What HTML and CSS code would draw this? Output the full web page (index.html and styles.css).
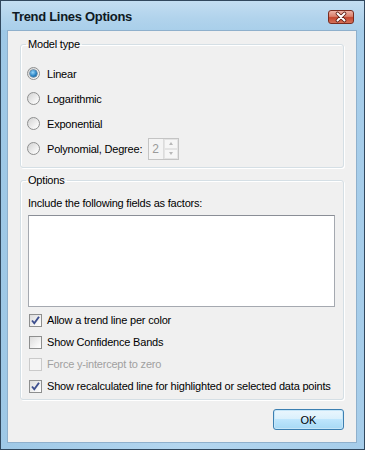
FILE: index.html
```html
<!DOCTYPE html>
<html lang="en">
<head>
  <meta charset="UTF-8" />
  <title>Trend Lines Options</title>
  <link rel="stylesheet" href="styles.css">
</head>
<body>
  <div class="window">
    <div class="titlebar">
      <span class="title">Trend Lines Options</span>
      <span class="close">
        <svg width="24" height="12" viewBox="0 0 24 12">
          <path d="M8.5 2.5 L15.5 9.5 M15.5 2.5 L8.5 9.5" stroke="#5a1a10" stroke-width="3.6" stroke-linecap="round"/>
          <path d="M8.5 2.5 L15.5 9.5 M15.5 2.5 L8.5 9.5" stroke="#ffffff" stroke-width="2" stroke-linecap="round"/>
        </svg>
      </span>
    </div>

    <div class="client">
      <fieldset class="group model">
        <legend>Model type</legend>
        <div class="choice"><span class="radio on"></span>Linear</div>
        <div class="choice"><span class="radio"></span>Logarithmic</div>
        <div class="choice"><span class="radio"></span>Exponential</div>
        <div class="choice">
          <span class="radio"></span>Polynomial, Degree:
          <span class="spin">
            <span class="spin-value">2</span>
            <span class="spin-buttons">
              <span class="spin-btn up"></span>
              <span class="spin-btn down"></span>
            </span>
          </span>
        </div>
      </fieldset>

      <fieldset class="group options">
        <legend>Options</legend>
        <div class="hint">Include the following fields as factors:</div>
        <div class="listbox"></div>
        <div class="check">
          <span class="box on"><svg width="11" height="11" viewBox="0 0 11 11"><path d="M2 5.5 L4.3 8.3 L9 1.8" fill="none" stroke="#3d4f8f" stroke-width="1.9"/></svg></span>
          Allow a trend line per color
        </div>
        <div class="check"><span class="box"></span>Show Confidence Bands</div>
        <div class="check disabled"><span class="box"></span>Force y-intercept to zero</div>
        <div class="check">
          <span class="box on"><svg width="11" height="11" viewBox="0 0 11 11"><path d="M2 5.5 L4.3 8.3 L9 1.8" fill="none" stroke="#3d4f8f" stroke-width="1.9"/></svg></span>
          Show recalculated line for highlighted or selected data points
        </div>
      </fieldset>

      <div class="buttons">
        <button class="ok">OK</button>
      </div>
    </div>
  </div>
</body>
</html>
```

FILE: styles.css
```css
body {
  margin: 0;
  font-family: 'Liberation Sans', Arial, sans-serif;
  font-size: 11px;
  letter-spacing: -0.2px;
  color: #000;
  background: #fff;
}
.window {
  width: 365px;
  height: 450px;
  box-sizing: border-box;
  border: 1px solid #31485e;
  background: linear-gradient(90deg, #9ec8e6, #b4d6ef 50%, #a6cdea);
  display: flex;
  flex-direction: column;
}
.titlebar {
  height: 29px;
  display: flex;
  justify-content: space-between;
  align-items: flex-start;
  padding: 0 10px 0 11px;
  background: linear-gradient(#c3def2, #b1d3ec 60%, #a9cfea);
}
.title {
  margin-top: 8px;
  font-size: 13px;
  line-height: 16px;
  font-weight: bold;
  letter-spacing: -0.3px;
  color: #0f1a24;
}
.close {
  margin-top: 9px;
  width: 26px;
  height: 14px;
  box-sizing: border-box;
  border: 1px solid #7a2b1e;
  border-radius: 3px;
  background: linear-gradient(#eeb3a6, #d9806c 45%, #c4452d 55%, #d4725a);
  display: flex;
  align-items: center;
  justify-content: center;
}
.client {
  flex: 1;
  margin: 0 7px 6px 6px;
  padding: 6px 12px 0 12px;
  border: 1px solid #8fb0cc;
  background: #f0f0f0;
}
.group {
  margin: 0;
  padding: 0 0 6px 0;
  border: 1px solid #d5dfe5;
  border-radius: 3px;
  box-shadow: inset 1px 1px #fff, 1px 1px #fff;
}
.group legend {
  margin-left: 5px;
  padding: 0 2px;
  line-height: 14px;
  color: #000;
}
.model {
  padding-top: 10px;
}
.choice {
  height: 25px;
  display: flex;
  align-items: center;
  padding-left: 6px;
}
.radio {
  width: 13px;
  height: 13px;
  box-sizing: border-box;
  border: 1px solid #8e8f8f;
  border-radius: 50%;
  background: linear-gradient(135deg, #d2d2d2, #f4f4f4 70%, #fff);
  margin-right: 7px;
  display: flex;
  align-items: center;
  justify-content: center;
}
.radio.on::after {
  content: '';
  width: 7px;
  height: 7px;
  border-radius: 50%;
  background: radial-gradient(circle at 40% 35%, #9ad8fb, #2a83c4 55%, #0f4e7e);
  box-shadow: 0 0 0 0.5px #1f4f74;
}
.spin {
  margin-left: 6px;
  width: 31px;
  height: 22px;
  box-sizing: border-box;
  border: 1px solid #c4c4c4;
  background: #f4f4f4;
  display: flex;
}
.spin-value {
  flex: 1;
  padding-left: 3px;
  line-height: 20px;
  font-size: 12px;
  color: #9a9a9a;
}
.spin-buttons {
  width: 14px;
  display: flex;
  flex-direction: column;
  border-left: 1px solid #dcdcdc;
}
.spin-btn {
  flex: 1;
  display: flex;
  align-items: center;
  justify-content: center;
  border: 1px solid #e4e4e4;
  background: #f6f6f6;
}
.spin-btn.up::after {
  content: '';
  border: 2.5px solid transparent;
  border-bottom: 3px solid #b8b8b8;
  border-top: 0;
}
.spin-btn.down::after {
  content: '';
  border: 2.5px solid transparent;
  border-top: 3px solid #b8b8b8;
  border-bottom: 0;
}
.options {
  margin-top: 5px;
  padding-top: 9px;
  padding-bottom: 2px;
}
.hint {
  line-height: 14px;
  padding-left: 7px;
}
.listbox {
  height: 92px;
  margin: 5px 8px 2px 7px;
  box-sizing: border-box;
  border: 1px solid #a5a9b0;
  border-top-color: #8a8e96;
  background: #fff;
}
.check {
  height: 22px;
  display: flex;
  align-items: center;
  padding-left: 8px;
}
.box {
  width: 13px;
  height: 13px;
  box-sizing: border-box;
  border: 1px solid #8e8f8f;
  background: linear-gradient(135deg, #dcdcdc, #f6f6f6 70%, #fff);
  margin-right: 5px;
  display: flex;
  align-items: center;
  justify-content: center;
}
.check.disabled {
  color: #a0a0a0;
}
.check.disabled .box {
  border-color: #cacaca;
  background: #f4f4f4;
}
.buttons {
  display: flex;
  justify-content: flex-end;
  margin-top: 9px;
}
.ok {
  width: 71px;
  height: 21px;
  margin: 0;
  padding: 0;
  border: 1px solid #3c7fb1;
  border-radius: 3px;
  background: linear-gradient(#eaf6fd, #d9f0fc 50%, #bee6fd 50%, #a7d9f5);
  box-shadow: inset 0 0 0 1px #c6e6f8;
  font-family: 'Liberation Sans', Arial, sans-serif;
  font-size: 11px;
  color: #000;
}
```
